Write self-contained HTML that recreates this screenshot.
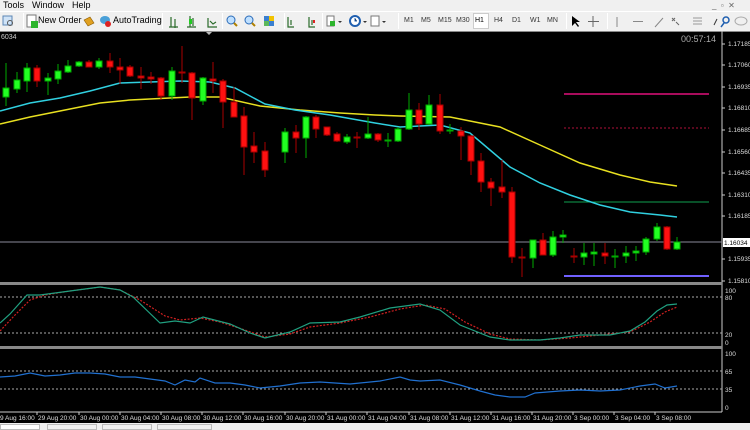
<!DOCTYPE html>
<html><head><meta charset="utf-8"><style>
*{margin:0;padding:0;box-sizing:border-box}
body{width:750px;height:430px;overflow:hidden;background:#f0f0f0;font-family:"Liberation Sans",sans-serif;position:relative}
.t{position:absolute;white-space:nowrap}
.menu{font-size:9px;color:#000;top:0px}
.tb{font-size:9px;color:#000;top:15px}
.sep{position:absolute;top:13px;width:1px;height:16px;background:#c8c8c8;border-right:1px solid #fff}
.tf{position:absolute;top:17px;font-size:7px;color:#333}
</style></head><body>
<div class="t menu" style="left:3px">Tools</div>
<div class="t menu" style="left:32px">Window</div>
<div class="t menu" style="left:72px">Help</div>
<div class="t" style="left:712px;top:1px;font-size:8px;color:#666">_&nbsp;&nbsp;▫&nbsp;&nbsp;✕</div>
<!-- toolbar -->
<div style="position:absolute;left:0;top:11px;width:750px;height:20px;background:#f0f0f0;border-top:1px solid #fff"></div>
<svg style="position:absolute;left:0;top:12px" width="750" height="19">
<rect x="3" y="4" width="9" height="9" fill="#cfe3f7" stroke="#5b86b5"/><circle cx="10" cy="11" r="2.5" fill="none" stroke="#555"/>
<rect x="27" y="3" width="9" height="12" fill="#fff" stroke="#777"/><rect x="31" y="9" width="7" height="7" fill="#2db52d"/>
<path d="M84 8 l6 -3 l4 6 l-6 3z" fill="#e0a020" stroke="#8a5a00" stroke-width=".6"/>
<ellipse cx="105" cy="8" rx="5" ry="4" fill="#4aa0d8"/><circle cx="108" cy="12" r="3" fill="#d22"/>
<g stroke="#2a6a2a" stroke-width="1.2" fill="none"><path d="M171 5v10M175 7v9M169 15h9"/><path d="M190 4v11M193 6v8M187 15h9"/><rect x="189" y="7" width="3" height="5" fill="#2c2" stroke="none"/><path d="M208 6v9h9M210 9l3 3 3-2"/></g>
<circle cx="231" cy="8" r="4" fill="#bfe0ff" stroke="#2a6bb8"/><path d="M234 11l3 3" stroke="#b08000" stroke-width="2"/>
<circle cx="249" cy="8" r="4" fill="#bfe0ff" stroke="#2a6bb8"/><path d="M252 11l3 3" stroke="#b08000" stroke-width="2"/>
<rect x="264" y="4" width="10" height="10" fill="#3a7fd0"/><rect x="269" y="4" width="5" height="5" fill="#f2c300"/><rect x="264" y="9" width="5" height="5" fill="#5cb85c"/>
<path d="M288 5v10h6M291 8v5" stroke="#2a6a2a" stroke-width="1.2" fill="none"/><path d="M309 5v10h6M312 8v5" stroke="#2a6a2a" stroke-width="1.2" fill="none"/><rect x="313" y="8" width="2" height="3" fill="#d22"/>
<rect x="327" y="4" width="7" height="10" fill="#fff" stroke="#777"/><rect x="330" y="9" width="5" height="5" fill="#2db52d"/><path d="M338 9l2 2 2-2z" fill="#333"/>
<circle cx="355" cy="9" r="5" fill="#fff" stroke="#1f5fb0" stroke-width="2"/><path d="M355 6v3h2" stroke="#1f5fb0"/><path d="M363 9l2 2 2-2z" fill="#333"/>
<rect x="371" y="4" width="8" height="10" fill="#fff" stroke="#777"/>
<path d="M382 9l2 2 2-2z" fill="#333"/>
<path d="M572 4v10l3-3 3 4 1-1-3-4h4z" fill="#000"/>
<path d="M593 4v11M588 9.5h11" stroke="#666"/>
<path d="M617 5v10M633 9.5h10M655 15l8-9" stroke="#888"/>
<path d="M672 6l3 3m0-3l-3 3M676 10l3 3" stroke="#666"/>
<path d="M693 6h9M693 9h9M693 12h9" stroke="#999"/>
<path d="M714 13l3-6" stroke="#333"/>
<circle cx="726" cy="8" r="3" fill="none" stroke="#1f5fb0" stroke-width="1.5"/><path d="M724 11l-3 4" stroke="#1f5fb0" stroke-width="1.5"/>
<ellipse cx="741" cy="9" rx="6" ry="4" fill="none" stroke="#aaa"/>
</svg>
<div class="t tb" style="left:38px">New Order</div>
<div class="t tb" style="left:113px">AutoTrading</div>
<div class="sep" style="left:23px"></div><div class="sep" style="left:162px"></div><div class="sep" style="left:222px"></div><div class="sep" style="left:284px"></div><div class="sep" style="left:322px"></div><div class="sep" style="left:398px"></div><div class="sep" style="left:566px"></div><div class="sep" style="left:607px"></div>
<div style="position:absolute;left:473px;top:13px;width:16px;height:16px;background:#fff;border:1px solid #ccc"></div>
<div class="tf" style="left:404px">M1</div><div class="tf" style="left:421px">M5</div><div class="tf" style="left:438px">M15</div><div class="tf" style="left:456px">M30</div><div class="tf" style="left:475px;color:#000">H1</div><div class="tf" style="left:494px">H4</div><div class="tf" style="left:512px">D1</div><div class="tf" style="left:530px">W1</div><div class="tf" style="left:547px">MN</div>

<!-- chart -->
<svg style="position:absolute;left:0;top:31px" width="750" height="392" viewBox="0 31 750 392" font-family="Liberation Sans" font-size="7">
<rect x="0" y="31" width="750" height="392" fill="#000"/>
<rect x="0" y="31" width="750" height="1" fill="#888"/>
<path d="M722 31v381M0 412h722" stroke="#ccc"/>
<rect x="0" y="282" width="722" height="3" fill="#888"/>
<rect x="0" y="346" width="722" height="3" fill="#888"/>
<path d="M206 32l3 3 3-3z" fill="#bbb"/>
<text x="1" y="39" fill="#ccc">6034</text>
<text x="681" y="42" fill="#aaa" font-size="9">00:57:14</text>
<g fill="#ddd" font-size="6.5">
<text x="728" y="46">1.17185</text><text x="728" y="67">1.17060</text><text x="728" y="89">1.16935</text><text x="728" y="110">1.16810</text><text x="728" y="132">1.16685</text><text x="728" y="154">1.16560</text><text x="728" y="175">1.16435</text><text x="728" y="197">1.16310</text><text x="728" y="218">1.16185</text><text x="728" y="261">1.15935</text><text x="728" y="283">1.15810</text>
<text x="725" y="293">100</text><text x="725" y="300">80</text><text x="725" y="337">20</text><text x="725" y="345">0</text>
<text x="725" y="356">100</text><text x="725" y="374">65</text><text x="725" y="392">35</text><text x="725" y="410">0</text>
</g>
<path d="M722 44h3M722 65h3M722 87h3M722 108h3M722 130h3M722 152h3M722 173h3M722 195h3M722 216h3M722 259h3M722 281h3" stroke="#ccc"/>
<!-- levels -->
<path d="M564 94h145" stroke="#e0107a" stroke-width="1.5"/>
<path d="M564 128h145" stroke="#b0103a" stroke-dasharray="2,2"/>
<path d="M564 202h145" stroke="#10a050"/>
<path d="M564 276h145" stroke="#7060ff" stroke-width="2"/>
<path d="M0 242h722" stroke="#8a8a9a"/>
<rect x="723" y="238" width="27" height="9" fill="#fff"/><text x="724" y="245" fill="#000" font-size="6.5">1.16034</text>
<!-- MAs -->
<polyline fill="none" stroke="#e8e020" stroke-width="1.5" points="0,124 30,117 60,111 100,103 130,100 170,98 190,97 220,97 260,106 300,110 340,113 375,115 400,116 450,117 500,127 540,145 580,163 620,175 650,182 677,186"/>
<polyline fill="none" stroke="#30d0e0" stroke-width="1.5" points="0,111 30,103 60,98 90,91 120,83 150,82 180,81 210,82 235,88 265,104 295,110 330,115 375,123 400,127 440,125 470,133 490,150 510,167 540,183 570,195 600,205 630,212 660,215 677,217"/>
<!-- candles -->
<g id="c" stroke-width="1">
<g stroke="#0a0" fill="#2f2">
<path d="M6 63v43M17 72v21M27 63v29M48 73v22M58 64v20M68 60v13M79 61v6M99 58v11M172 67v33M203 77v28M285 128v35M306 116v42M347 134v10M368 117v22M388 133v14M398 127v15M409 93v37M429 95v30M450 124v10M533 240v28M553 231v26M563 230v13M584 243v22M594 243v23M615 249v19M626 246v17M636 246v15M646 237v18M657 223v18M677 237v13"/>
<rect x="3" y="88" width="6" height="9"/><rect x="14" y="80" width="6" height="9"/><rect x="24" y="68" width="6" height="13"/><rect x="45" y="78" width="6" height="3"/><rect x="55" y="71" width="6" height="8"/><rect x="65" y="66" width="6" height="6"/><rect x="76" y="62" width="6" height="4"/><rect x="96" y="61" width="6" height="6"/><rect x="169" y="71" width="6" height="25"/><rect x="200" y="78" width="6" height="23"/><rect x="282" y="132" width="6" height="20"/><rect x="303" y="117" width="6" height="21"/><rect x="344" y="137" width="6" height="5"/><rect x="365" y="134" width="6" height="4"/><rect x="385" y="140" width="6" height="1"/><rect x="395" y="129" width="6" height="12"/><rect x="406" y="110" width="6" height="19"/><rect x="426" y="105" width="6" height="19"/><rect x="447" y="130" width="6" height="1"/><rect x="530" y="240" width="6" height="18"/><rect x="550" y="237" width="6" height="18"/><rect x="560" y="235" width="6" height="2"/><rect x="581" y="253" width="6" height="4"/><rect x="591" y="252" width="6" height="2"/><rect x="612" y="256" width="6" height="1"/><rect x="623" y="253" width="6" height="3"/><rect x="633" y="251" width="6" height="2"/><rect x="643" y="239" width="6" height="13"/><rect x="654" y="227" width="6" height="12"/><rect x="674" y="242" width="6" height="7"/>
</g>
<g stroke="#a00" fill="#f11">
<path d="M37 65v22M89 60v7M110 53v20M120 58v26M130 65v12M141 67v22M151 72v12M161 77v23M182 46v37M192 72v48M213 62v31M223 79v49M234 87v30M244 107v68M254 132v31M265 142v35M296 125v28M316 115v23M327 127v9M337 132v10M357 132v16M378 133v9M419 103v27M440 94v40M461 127v33M471 135v40M481 153v39M491 178v28M502 160v38M512 187v76M522 248v29M543 233v22M574 248v15M605 243v21M667 226v24"/>
<rect x="34" y="68" width="6" height="13"/><rect x="86" y="62" width="6" height="5"/><rect x="107" y="61" width="6" height="6"/><rect x="117" y="67" width="6" height="3"/><rect x="127" y="67" width="6" height="9"/><rect x="138" y="76" width="6" height="2"/><rect x="148" y="77" width="6" height="2"/><rect x="158" y="78" width="6" height="18"/><rect x="179" y="72" width="6" height="1"/><rect x="189" y="73" width="6" height="25"/><rect x="210" y="79" width="6" height="2"/><rect x="220" y="81" width="6" height="21"/><rect x="231" y="102" width="6" height="15"/><rect x="241" y="116" width="6" height="31"/><rect x="251" y="146" width="6" height="6"/><rect x="262" y="151" width="6" height="19"/><rect x="293" y="132" width="6" height="6"/><rect x="313" y="117" width="6" height="12"/><rect x="324" y="127" width="6" height="8"/><rect x="334" y="134" width="6" height="7"/><rect x="354" y="137" width="6" height="1"/><rect x="375" y="134" width="6" height="6"/><rect x="416" y="110" width="6" height="14"/><rect x="437" y="105" width="6" height="26"/><rect x="458" y="131" width="6" height="5"/><rect x="468" y="136" width="6" height="25"/><rect x="478" y="161" width="6" height="21"/><rect x="488" y="182" width="6" height="6"/><rect x="499" y="187" width="6" height="5"/><rect x="509" y="192" width="6" height="65"/><rect x="519" y="257" width="6" height="1"/><rect x="540" y="240" width="6" height="15"/><rect x="571" y="256" width="6" height="1"/><rect x="602" y="253" width="6" height="3"/><rect x="664" y="227" width="6" height="22"/>
</g>
</g>
<!-- stochastic -->
<path d="M0 297h722M0 333h722M0 371h722M0 389h722" stroke="#aaa" stroke-dasharray="2,2"/>
<polyline fill="none" stroke="#d02020" stroke-dasharray="2,1.5" stroke-width="1.2" points="0,331 15,315 30,300 45,295 70,291 100,287 120,290 140,300 165,316 180,320 200,318 220,322 245,330 265,337 290,334 310,327 340,323 370,317 400,309 425,305 445,309 465,322 490,334 510,339 540,340 570,338 600,335 630,332 650,322 665,312 677,307"/>
<polyline fill="none" stroke="#20a080" stroke-width="1.2" points="0,323 10,314 27,295 40,295 70,291 100,287 120,290 133,297 160,323 175,321 190,323 203,317 230,324 250,333 265,338 290,332 310,323 340,322 360,317 390,308 420,304 440,310 460,325 490,337 510,340 540,340 560,338 580,335 610,335 630,331 645,322 657,311 667,305 677,304"/>
<!-- RSI -->
<polyline fill="none" stroke="#2070d0" stroke-width="1.2" points="0,377 15,376 30,373 45,376 60,375 75,373 90,373 105,374 120,377 135,377 150,379 165,381 175,385 185,380 195,382 200,378 215,383 230,383 245,385 260,388 280,386 300,383 320,382 350,384 380,381 400,377 410,380 420,381 440,380 460,385 480,391 495,395 510,397 525,397 535,393 560,391 580,390 600,391 620,390 640,386 655,384 665,388 677,386"/>
<!-- time axis -->
<g stroke="#ccc"><path d="M37 412v3M79 412v3M120 412v3M161 412v3M202 412v3M243 412v3M285 412v3M326 412v3M367 412v3M409 412v3M450 412v3M491 412v3M532 412v3M573 412v3M614 412v3M655 412v3"/></g>
<g fill="#ddd" font-size="6.5">
<text x="0" y="420">9 Aug 16:00</text><text x="38" y="420">29 Aug 20:00</text><text x="80" y="420">30 Aug 00:00</text><text x="121" y="420">30 Aug 04:00</text><text x="162" y="420">30 Aug 08:00</text><text x="203" y="420">30 Aug 12:00</text><text x="244" y="420">30 Aug 16:00</text><text x="286" y="420">30 Aug 20:00</text><text x="327" y="420">31 Aug 00:00</text><text x="368" y="420">31 Aug 04:00</text><text x="410" y="420">31 Aug 08:00</text><text x="451" y="420">31 Aug 12:00</text><text x="492" y="420">31 Aug 16:00</text><text x="533" y="420">31 Aug 20:00</text><text x="574" y="420">3 Sep 00:00</text><text x="615" y="420">3 Sep 04:00</text><text x="656" y="420">3 Sep 08:00</text>
</g>
</svg>
<!-- bottom tabs -->
<div style="position:absolute;left:0;top:423px;width:750px;height:7px;background:#f0f0f0"></div>
<div style="position:absolute;left:0;top:424px;width:40px;height:6px;background:#fff;border:1px solid #bbb"></div>
<div style="position:absolute;left:47px;top:424px;width:50px;height:6px;border:1px solid #bbb"></div>
<div style="position:absolute;left:102px;top:424px;width:50px;height:6px;border:1px solid #bbb"></div>
<div style="position:absolute;left:157px;top:424px;width:55px;height:6px;border:1px solid #bbb"></div>
</body></html>
